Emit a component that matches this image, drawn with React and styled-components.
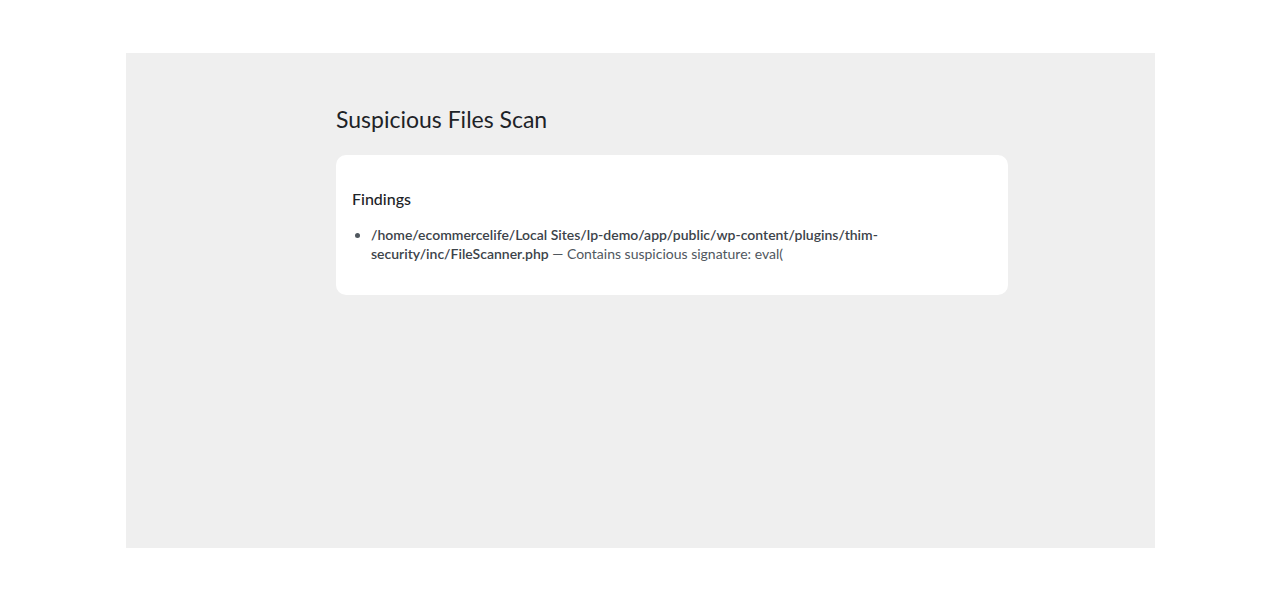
import React from 'react'
import styled, { createGlobalStyle } from 'styled-components'

const GlobalStyle = createGlobalStyle`
  body {
    margin: 0;
    background: #fff;
    font-family: Lato, "Open Sans", sans-serif;
    color: #1d2327;
  }
`

const Page = styled.div`
  padding: 53px 125px 52px 126px;
`

const Panel = styled.div`
  background: #efefef;
  height: 495px;
  box-sizing: border-box;
  padding: 51px 147px 0 210px;
`

const Title = styled.h1`
  margin: 0 0 20px;
  font-size: 23px;
  font-weight: 400;
  line-height: 31px;
  color: #1d2327;
`

const Card = styled.div`
  background: #fff;
  border-radius: 10px;
  padding: 1px 16px;
`

const Heading = styled.h3`
  margin: 33px 0 16px;
  font-size: 16px;
  font-weight: 500;
  line-height: 20px;
  color: #1d2327;
`

const List = styled.ul`
  margin: 0 0 31px;
  padding-left: 19px;
  font-size: 14px;
  line-height: 19px;
  color: #50575e;
`

const Item = styled.li`
  max-width: 540px;
`

const Path = styled.strong`
  font-weight: 600;
  color: #3c434a;
`

const App = () => {
  const findings = [
    {
      file: '/home/ecommercelife/Local Sites/lp-demo/app/public/wp-content/plugins/thim-security/inc/FileScanner.php',
      reason: 'Contains suspicious signature: eval(',
    },
  ]

  return (
    <>
      <GlobalStyle />
      <Page>
        <Panel>
          <Title>Suspicious Files Scan</Title>
          <Card>
            <Heading>Findings</Heading>
            <List>
              {findings.map((f) => (
                <Item key={f.file}>
                  <Path>{f.file}</Path> — {f.reason}
                </Item>
              ))}
            </List>
          </Card>
        </Panel>
      </Page>
    </>
  )
}

export default App
